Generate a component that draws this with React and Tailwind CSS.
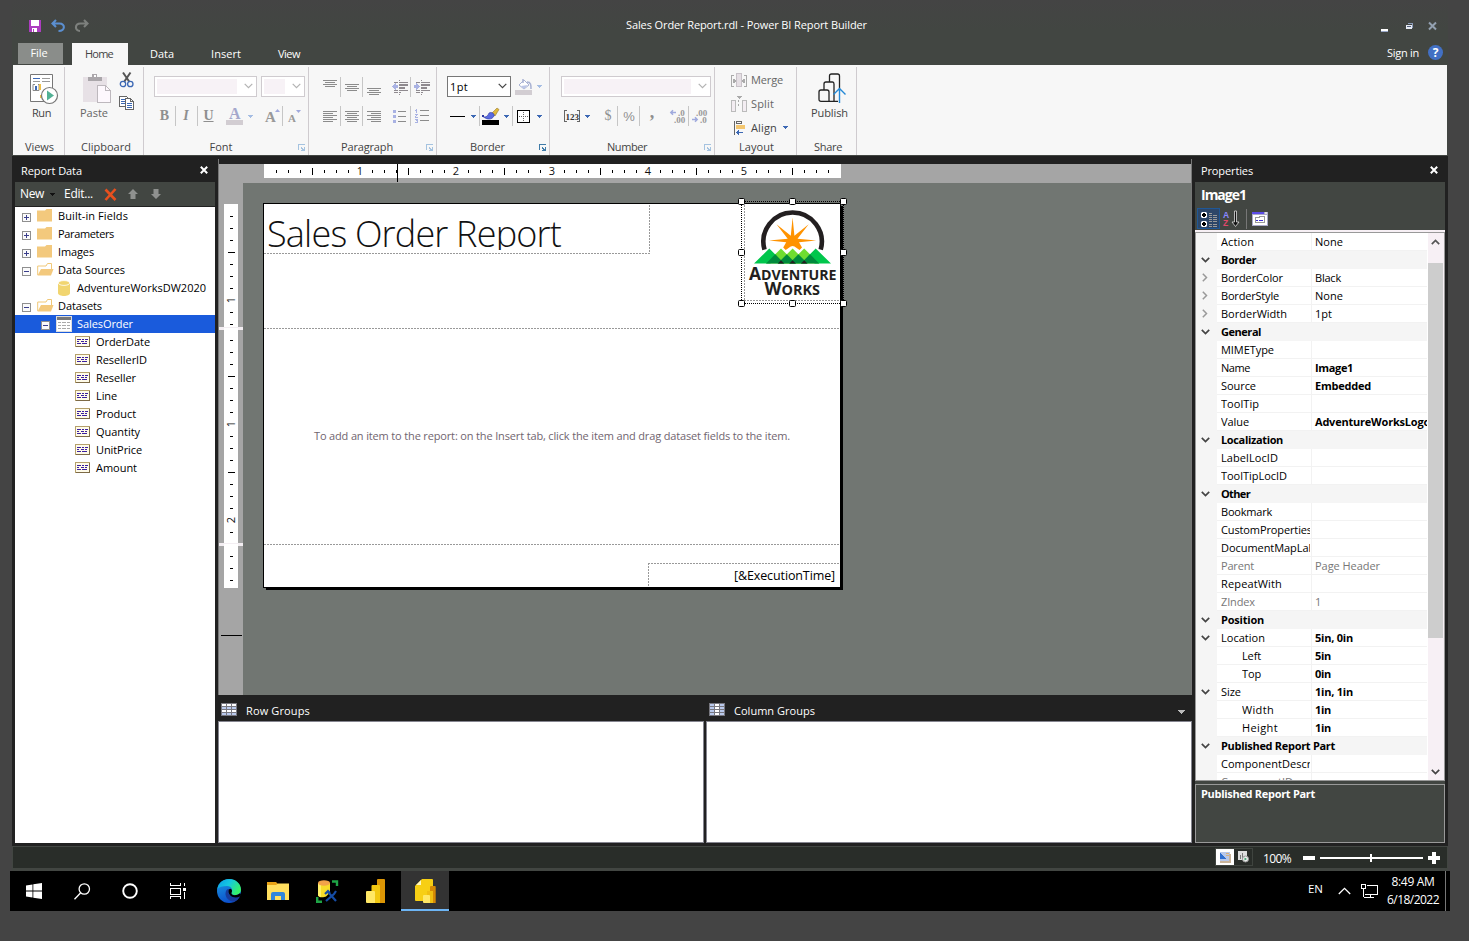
import { useLayoutEffect, useRef, useState } from "react";

/* Text run whose tracking is adjusted so that it spans a given width. */
function Txt({ w, className = "", children }) {
  const ref = useRef(null);
  const [spacing, setSpacing] = useState(0);
  useLayoutEffect(() => {
    if (!w) return;
    const el = ref.current;
    el.style.letterSpacing = "0px";
    const natural = el.getBoundingClientRect().width;
    const next = (w - natural) / String(children).length;
    el.style.letterSpacing = next + "px";
    setSpacing(next);
  }, [w, children]);
  return (
    <span ref={ref} className={"inline-block shrink-0 whitespace-pre " + className} style={{ letterSpacing: spacing }}>
      {children}
    </span>
  );
}

function Svg({ w, h, className = "", crisp = true, children }) {
  return (
    <svg
      width={w}
      height={h}
      viewBox={`0 0 ${w} ${h}`}
      fill="none"
      shapeRendering={crisp ? "crispEdges" : "auto"}
      className={"shrink-0 overflow-visible " + className}
    >
      {children}
    </svg>
  );
}

const Sep = ({ className = "" }) => <div className={"h-5 w-px shrink-0 bg-[#c6c6c6] " + className} />;

const Caret = ({ color = "#3c68b4", className = "" }) => (
  <Svg w={5} h={3} className={className}>
    <path d="M0 0h5v1H0zM1 1h3v1H1zM2 2h1v1H2z" fill={color} />
  </Svg>
);

const Chevron = ({ color, className = "" }) => (
  <Svg w={9} h={6} crisp={false} className={className}>
    <path d="M.7.8 4.5 4.6 8.3.8" stroke={color} strokeWidth="1.2" />
  </Svg>
);

const Launcher = ({ dim }) => (
  <Svg w={8} h={8}>
    <path d="M0 0h7v1H1v5H0z" fill={dim ? "#a5c3e0" : "#3f7ba8"} />
    <path d="M3 3h1v1h1v1h1V3h1v4H3V6h1V5H3z" fill={dim ? "#a5c3e0" : "#3f7ba8"} />
  </Svg>
);

/* ---------- title bar ---------- */

function TitleBar() {
  return (
    <div className="mb-[6px] flex h-[25px] items-center pl-[17px] text-white">
      <Svg w={12} h={12} className="mt-[2px]">
        <path d="M0 0h12v12H0z" fill="#ad3dc0" />
        <path d="M2 0h8v6H2z" fill="#fff" />
        <path d="M3 8h5v4H3z" fill="#fff" />
        <path d="M4 9h1v3H4z" fill="#ad3dc0" />
      </Svg>
      <Svg w={15} h={14} crisp={false} className="ml-[10px] mt-[2px]">
        <path d="M5 1 1.500 4.500 5 8M2 4.500h6.500c6 0 6 7.500-1 7.500" stroke="#5b8fd0" strokeWidth="2.100" />
      </Svg>
      <Svg w={15} h={14} crisp={false} className="ml-[8px] mt-[2px]">
        <path d="M10 1l3.500 3.500L10 8M13 4.500H6.500C.5 4.500.5 12 6 12" stroke="#7d807d" strokeWidth="2.100" />
      </Svg>
      <Txt w={241} className="ml-[537px]">Sales Order Report.rdl - Power BI Report Builder</Txt>
      <Svg w={7} h={3} className="ml-[514px] mt-[12px]">
        <path d="M0 0h7v2H0z" fill="#fff" />
        <path d="M0 2h7v1H0z" fill="#9aa9c8" />
      </Svg>
      <Svg w={8} h={7} className="ml-[18px] mt-[4px]">
        <path d="M2 0h5v5H6V1H2z" fill="#8c9bb8" />
        <path d="M0 2h6v4H0z" fill="#e8ecf5" />
        <path d="M1 3h4v1H1z" fill="#51607d" />
      </Svg>
      <Svg w={9} h={8} crisp={false} className="ml-[14px] mt-[3px]">
        <path d="M1 .5l7 7M8 .5l-7 7" stroke="#93a0b0" strokeWidth="2" />
      </Svg>
    </div>
  );
}

function Tabs() {
  return (
    <div className="flex h-[22px] pl-[6px] text-white">
      <div className="flex h-[21px] w-[45px] items-center justify-center bg-[#8a8d8a] pb-[2px] pr-[3px]"><Txt w={17}>File</Txt></div>
      <div className="ml-[9px] flex w-[56px] items-center justify-center bg-[#f7f7f7] pb-[2px] pr-[2px] text-[#444]"><Txt w={28}>Home</Txt></div>
      <div className="ml-[22px] flex items-center pb-[2px]"><Txt w={24}>Data</Txt></div>
      <div className="ml-[37px] flex items-center pb-[2px]"><Txt w={30}>Insert</Txt></div>
      <div className="ml-[37px] flex items-center pb-[2px]"><Txt w={22}>View</Txt></div>
      <div className="ml-auto flex items-center pb-[3px] pr-[5px]">
        <Txt w={32}>Sign in</Txt>
        <div className="ml-[9px] flex size-[15px] items-center justify-center rounded-full bg-[#4270c4] text-[12px] font-bold leading-none">?</div>
      </div>
    </div>
  );
}

/* ---------- ribbon ---------- */

function Group({ width, label, labelWidth, launcher, shift = "pl-[2px]", children }) {
  return (
    <div className={"relative flex shrink-0 flex-col " + width}>
      <div className="h-[73px]">{children}</div>
      <div className={"flex h-[17px] items-center justify-center text-[#444] " + shift}><Txt w={labelWidth}>{label}</Txt></div>
      {launcher && <div className="absolute bottom-[3px] right-[2px]"><Launcher dim={launcher === "dim"} /></div>}
    </div>
  );
}

const GroupSep = () => <div className="mt-[2px] h-[88px] w-px shrink-0 bg-[#cfcbcf]" />;

const Row = ({ className = "", children }) => <div className={"flex h-6 items-center " + className}>{children}</div>;

const Combo = ({ className, fill, value, dark }) => (
  <div className={"flex h-[21px] shrink-0 items-center border bg-white pl-[2px] pr-[3px] " + (dark ? "border-[#777] " : "border-[#cfcbcf] ") + className}>
    {fill && <div className={"h-[15px] bg-[#f7f2f6] " + fill} />}
    {value && <Txt w={18} className="text-black">{value}</Txt>}
    <Chevron color={dark ? "#444" : "#b3b3b3"} className="ml-auto" />
  </div>
);

function Lines({ rows, h, w = 14, className = "" }) {
  return (
    <Svg w={w} h={h} className={className}>
      {rows.map(([x, y, len]) => <path key={y} d={`M${x} ${y}h${len}v1h-${len}z`} fill="#8c8c8c" />)}
    </Svg>
  );
}

const TOP = [[0, 0, 14], [2, 2, 10], [0, 4, 14], [2, 6, 10]];
const LEFT = [[0, 0, 14], [0, 2, 10], [0, 4, 14], [0, 6, 10], [0, 8, 14], [0, 10, 10]];
const CENTER = [[0, 0, 14], [2, 2, 10], [0, 4, 14], [2, 6, 10], [0, 8, 14], [2, 10, 10]];
const RIGHT = [[0, 0, 14], [4, 2, 10], [0, 4, 14], [4, 6, 10], [0, 8, 14], [4, 10, 10]];

const Indent = ({ right, className }) => (
  <Svg w={16} h={15} className={className}>
    <path d="M7 0h1v1H7zM2 2h4v1H2zM7 2h9v1H7zM7 4h9v2H7zM7 7h6v2H7zM2 10h4v1H2zM7 10h9v1H7zM2 12h4v1H2zM7 12h2v1H7zM7 14h1v1H7z" fill="#8f8a8f" />
    <path d={right ? "M0 5h2V3h1v1h1v1h1v1h1v1H5v1H4v1H3v1H2V8H0z" : "M0 6h1V5h1V4h1V3h1v2h2v3H4v2H3V9H2V8H1V7H0z"} fill="#a9b2e3" />
  </Svg>
);

function Ribbon() {
  return (
    <div className="mx-px flex h-[90px] shrink-0 bg-[#f7f7f7]">
      <Group width="w-[51px]" label="Views" labelWidth={29}>
        <div className="flex flex-col items-center pl-[6px] pt-[8px] text-[#444]">
          <Svg w={29} h={31} crisp={false} className="ml-[4px]">
            <path d="M1.500 1.500h22v27h-22z" fill="#fff" stroke="#777" />
            <path d="M4 5.500h7" stroke="#3c68b4" /><path d="M13 5.500h8M4 8.500h7M13 8.500h8" stroke="#999" />
            <path d="M6 13h2v4H6z" fill="#3c68b4" /><path d="M9 11.500h1v6H4v-6h2" stroke="#8a8a8a" />
            <path d="M10 11h2v6h-2zM13 22h-2v3h2z" fill="#efc14a" />
            <circle cx="20.500" cy="22.500" r="8" fill="#fff" stroke="#777" strokeWidth="1.200" />
            <path d="M18 17.500l7 5-7 5z" fill="#52b195" />
          </Svg>
          <Txt w={19} className="mt-[3px]">Run</Txt>
        </div>
      </Group>
      <GroupSep />
      <Group width="w-[78px]" label="Clipboard" labelWidth={50} shift="pl-[4px]">
        <div className="flex">
          <div className="flex w-[46px] flex-col items-end pt-[8px] text-[#666]">
            <Svg w={29} h={31}>
              <path d="M1 4h24v25H1z" fill="#e7e1e6" />
              <path d="M6 8V4h4V1h5v3h5v4z" fill="#aaa6aa" /><path d="M12 2h2v2h-2z" fill="#fff" />
              <path d="M15.500 12.500h8l5 5v12h-13z" fill="#fdf8fd" stroke="#bdb8bd" /><path d="M23.500 12.500v5h5" stroke="#bdb8bd" />
            </Svg>
            <Txt w={28} className="mr-[3px] mt-[3px]">Paste</Txt>
          </div>
          <div className="ml-[7px] flex flex-col pt-[7px]">
            <Svg w={16} h={16} crisp={false} className="ml-[1px]">
              <path d="M4 .5l6.500 9.500M11.500.500 5 10" stroke="#555" strokeWidth="2" />
              <circle cx="4" cy="12" r="2.700" stroke="#3c68b4" strokeWidth="1.300" /><circle cx="11.300" cy="12" r="2.700" stroke="#3c68b4" strokeWidth="1.300" />
            </Svg>
            <Svg w={16} h={15} className="ml-px mt-[8px]">
              <path d="M.5.500h7l2 2v8h-9z" fill="#fff" stroke="#666" />
              <path d="M2 3h4v1H2zM2 5h4v1H2zM2 7h4v1H2z" fill="#3c68b4" />
              <path d="M6.500 2.500h5l3 3v8h-8z" fill="#fff" stroke="#666" /><path d="M11.500 2.500v3h3" stroke="#666" />
              <path d="M8 7h5v1H8zM8 9h5v1H8zM8 11h5v1H8z" fill="#3c68b4" />
            </Svg>
          </div>
        </div>
      </Group>
      <GroupSep />
      <Group width="w-[164px]" label="Font" labelWidth={23} launcher="dim" shift="pr-[10px]">
        <Row className="mt-[9px] pl-[10px]">
          <Combo className="w-[103px]" fill="w-[80px]" />
          <Combo className="ml-[4px] w-[44px]" fill="w-[21px]" />
        </Row>
        <Row className="mt-[6px] pl-[15px] font-['Liberation_Serif'] text-[14px] font-bold text-[#8f8f8f]">
          <span className="w-[11px] text-center">B</span>
          <Sep className="ml-[5px]" />
          <span className="ml-[5px] w-[10px] text-center italic">I</span>
          <Sep className="ml-[6px]" />
          <span className="ml-[5px] w-[11px] text-center underline">U</span>
          <Svg w={17} h={17} crisp={false} className="ml-[12px]">
            <text x="3" y="11" fontFamily="Liberation Serif" fontSize="16" fontWeight="bold" fill="#a5a8cc">A</text>
            <path d="M0 12h17v5H0z" fill="#d2cdd2" />
          </Svg>
          <Caret color="#a5bde3" className="ml-[5px]" />
          <Svg w={15} h={14} crisp={false} className="ml-[12px]">
            <text x="0" y="13" fontFamily="Liberation Serif" fontSize="15" fontWeight="bold" fill="#999">A</text>
            <path d="M10 3h5l-2.500-3z" fill="#9fa8dc" />
          </Svg>
          <Sep className="ml-[2px]" />
          <Svg w={13} h={14} crisp={false} className="ml-[5px]">
            <text x="0" y="13" fontFamily="Liberation Serif" fontSize="11" fontWeight="bold" fill="#999">A</text>
            <path d="M8 1h5l-2.500 3z" fill="#9fa8dc" />
          </Svg>
        </Row>
      </Group>
      <GroupSep />
      <Group width="w-[127px]" label="Paragraph" labelWidth={52} launcher="dim" shift="pr-[11px]">
        <Row className="mt-[10px] pl-[14px]">
          <Lines rows={TOP} h={14} />
          <Sep className="ml-[3px]" />
          <Lines rows={TOP} h={7} className="ml-[4px]" />
          <Sep className="ml-[3px]" />
          <Lines rows={TOP} h={7} className="ml-[4px] mt-[8px]" />
          <Indent className="ml-[11px]" />
          <Sep className="ml-[2px]" />
          <Indent right className="ml-[3px]" />
        </Row>
        <Row className="mt-[5px] pl-[14px]">
          <Lines rows={LEFT} h={11} />
          <Sep className="ml-[3px]" />
          <Lines rows={CENTER} h={11} className="ml-[4px]" />
          <Sep className="ml-[3px]" />
          <Lines rows={RIGHT} h={11} className="ml-[4px]" />
          <Svg w={14} h={13} className="ml-[12px] mt-[1px]">
            <path d="M0 0h3v3H0zM0 5h3v3H0zM0 10h3v3H0z" fill="#a9b2e3" />
            <path d="M5 1h8v1H5zM5 6h8v1H5zM5 11h8v1H5z" fill="#8c8c8c" />
          </Svg>
          <Sep className="ml-[3px]" />
          <Svg w={15} h={14} className="ml-[4px]">
            <path d="M1 0h1v4H1zM0 1h1v1H0zM0 5h3v1H2v1H1v1h2v1H0V7h1V6H0zM0 10h3v4H0v-1h2v-1H1v-1H0z" fill="#a9b2e3" />
            <path d="M5 1h9v1H5zM5 6h9v1H5zM5 11h9v1H5z" fill="#8c8c8c" />
          </Svg>
        </Row>
      </Group>
      <GroupSep />
      <Group width="w-[112px]" label="Border" labelWidth={35} launcher="on" shift="pr-[11px]">
        <Row className="mt-[9px] pl-[10px]">
          <Combo className="w-[64px]" value="1pt" dark />
          <Svg w={18} h={17} crisp={false} className="ml-[4px] mt-[1px]">
            <path d="M0 12h17v5H0z" fill="#d2cdd2" />
            <path d="M4 7l5-5 5 5-5 4z" fill="#fff" stroke="#a9b2d3" />
            <path d="M6 8l7-1-4 4z" fill="#bcc6e6" /><path d="M8 5V1M12 4c4 0 4 3 4 7" stroke="#a9b2d3" strokeWidth="1.500" />
          </Svg>
          <Caret color="#a5bde3" className="ml-[4px]" />
        </Row>
        <Row className="mt-[6px] pl-[13px]">
          <div className="h-px w-[15px] bg-black" />
          <Caret className="ml-[6px]" />
          <Sep className="ml-[3px]" />
          <Svg w={18} h={17} crisp={false} className="ml-[2px] mt-[1px]">
            <path d="M0 12h17v5H0z" fill="#000" />
            <path d="M10 5l5-5 2 1.500-4 6.500z" fill="#e0b83c" stroke="#8a6d20" strokeWidth=".5" /><path d="M1 8.500c3 1.500 5-1 6-3.500 2-1.500 6 .5 5 3-2 4-7 4-11 .5z" fill="#5a6be0" stroke="#2b35a0" strokeWidth=".6" /><path d="M0 7h2v2H0z" fill="#2b35a0" />
          </Svg>
          <Caret className="ml-[4px]" />
          <Sep className="ml-[3px]" />
          <Svg w={13} h={13} className="ml-[4px]">
            <path d="M.5.500h12v12H.5z" fill="#fff" stroke="#000" />
            <path d="M6 2h1v1H6zM6 4h1v1H6zM6 6h1v1H6zM6 8h1v1H6zM6 10h1v1H6zM2 6h1v1H2zM4 6h1v1H4zM8 6h1v1H8zM10 6h1v1h-1z" fill="#666" />
          </Svg>
          <Caret className="ml-[7px]" />
        </Row>
      </Group>
      <GroupSep />
      <Group width="w-[164px]" label="Number" labelWidth={40} launcher="dim" shift="pr-[10px]">
        <Row className="mt-[9px] pl-[11px]">
          <Combo className="w-[150px]" fill="w-[127px]" />
        </Row>
        <Row className="mt-[6px] pl-[14px] text-[#8f8f8f]">
          <Svg w={16} h={12}>
            <path d="M3 .5H.5v11H3M13 .5h2.500v11H13" stroke="#666" />
            <text x="1.500" y="9.500" fontFamily="Liberation Serif" fontSize="9" fontWeight="bold" fill="#333">123</text>
          </Svg>
          <Caret className="ml-[5px]" />
          <span className="ml-[12px] w-[12px] text-center font-['Liberation_Serif'] text-[14px]">$</span>
          <Sep className="ml-[3px]" />
          <span className="ml-[4px] w-[14px] text-center font-['Liberation_Sans'] text-[13px]">%</span>
          <Sep className="ml-[3px]" />
          <span className="ml-[8px] w-[8px] pb-[8px] text-center font-['Liberation_Serif'] text-[18px] font-bold">,</span>
          <Svg w={16} h={14} crisp={false} className="ml-[14px]">
            <path d="M6 3.500H1M3 1.200.800 3.500 3 5.800" stroke="#a0aadd" strokeWidth="1.500" />
            <text x="8" y="6.500" fontFamily="Liberation Serif" fontSize="9" fontWeight="bold" fill="#999">.0</text>
            <text x="4" y="14" fontFamily="Liberation Serif" fontSize="9" fontWeight="bold" fill="#999">.00</text>
          </Svg>
          <Sep className="ml-[2px]" />
          <Svg w={16} h={14} crisp={false} className="ml-[3px]">
            <path d="M0 10.500h5M3 8.200l2.200 2.300L3 12.800" stroke="#a0aadd" strokeWidth="1.500" />
            <text x="4" y="6.500" fontFamily="Liberation Serif" fontSize="9" fontWeight="bold" fill="#999">.00</text>
            <text x="8" y="14" fontFamily="Liberation Serif" fontSize="9" fontWeight="bold" fill="#999">.0</text>
          </Svg>
        </Row>
      </Group>
      <GroupSep />
      <Group width="w-[81px]" label="Layout" labelWidth={35}>
        <div className="flex flex-col pl-[16px] pt-[3px] text-[#666]">
          <Row>
            <Svg w={16} h={14}>
              <path d="M3 2.500H.5v11H3M13 2.500h2.500v11H13" stroke="#aaa" />
              <path d="M5.500.500h5v13h-5z" fill="#e5dfe4" stroke="#c8c2c8" /><path d="M2 6h2v1h1v2H4v1H2zM14 6h-2v1h-1v2h1v1h2z" fill="#aaa" />
            </Svg>
            <Txt w={32} className="mb-[2px] ml-[4px]">Merge</Txt>
          </Row>
          <Row>
            <Svg w={16} h={16}>
              <path d="M.5 4.500h4v11h-4zM11.500 4.500h4v11h-4z" fill="#f3edf2" stroke="#bbb" />
              <path d="M6 0h5v1H6zM7 1h3v1H7zM8 2h1v1H8zM7 4h1v2H7zM7 8h1v2H7z" fill="#aaa" />
            </Svg>
            <Txt w={23} className="mb-[2px] ml-[4px]">Split</Txt>
          </Row>
          <Row className="text-[#444]">
            <Svg w={14} h={14} className="ml-[3px]">
              <path d="M0 0h1v14H0z" fill="#666" /><path d="M2.500.500h5v2h-5z" stroke="#666" />
              <path d="M2 4h9v4H2z" fill="#f3c66f" /><path d="M2 11h1v-1h1V9h1v2h4v1H5v2H4v-1H3v-1H2z" fill="#3c68b4" />
            </Svg>
            <Txt w={26} className="mb-[2px] ml-[3px]">Align</Txt>
            <Caret className="mb-px ml-[6px]" />
          </Row>
        </div>
      </Group>
      <GroupSep />
      <Group width="w-[59px]" label="Share" labelWidth={28} shift="pl-[3px]">
        <div className="flex flex-col items-center pl-[6px] pt-[8px] text-[#444]">
          <Svg w={28} h={30} crisp={false} className="ml-[5px]">
            <path d="M11.500 9V3q0-2 2-2h6q2 0 2 2v13M6 17v-6q0-2 2-2h6.500q1.500 0 1.500 2v10" stroke="#222" strokeWidth="1.300" />
            <path d="M1 19q0-2 2-2h6q2 0 2 2v9.300H3q-2 0-2-2zM11 28.300h9M16 21v7" stroke="#222" strokeWidth="1.300" />
            <path d="M21.500 30V16M15.500 21.500l6-6 6 6" stroke="#2388d6" strokeWidth="1.400" />
          </Svg>
          <Txt w={37} className="mt-[4px]">Publish</Txt>
        </div>
      </Group>
      <GroupSep />
    </div>
  );
}

/* ---------- report data ---------- */

const CloseX = () => (
  <Svg w={8} h={8} crisp={false} className="mb-[2px]">
    <path d="M.8.800l6.400 6.400M7.200.800.800 7.200" stroke="#fff" strokeWidth="2" />
  </Svg>
);

const Toggle = ({ open }) => (
  <Svg w={9} h={9} className="mt-[2px]">
    <path d="M.5.500h8v8h-8z" fill="#fafafa" stroke="#8f8f8f" />
    <path d={open ? "M2 4h5v1H2z" : "M2 4h5v1H2zM4 2h1v5H4z"} fill="#3b3f8c" />
  </Svg>
);

const Folder = ({ open }) => (
  <Svg w={17} h={13} crisp={false} className="mb-[2px]">
    {open ? (
      <>
        <path d="M.7 12V3H9l1.500-2.500h4V6" stroke="#f0c878" strokeWidth="1" fill="#fff" />
        <path d="M.5 12.500 4 6h12.500l-2.500 6.500z" fill="#f3c97d" />
      </>
    ) : (
      <path d="M0 1.500h8l1.500-1.500H15v12.500H0z" fill="#f3c97d" />
    )}
  </Svg>
);

const FieldIcon = () => (
  <Svg w={15} h={11} className="mb-px">
    <path d="M.5.500h14v10H.5z" fill="#fffbe8" stroke="#7d6a46" />
    <path d="M0 0h15v1H0zM0 0h1v11H0z" fill="#b5a06c" />
    <path d="M2 3h4v1H2zM7 3h2v1H7zM10 3h3v1h-3zM2 5h2v1H2zM6 5h3v1H6zM10 5h2v1h-2zM2 7h4v1H2zM7 7h5v1H7z" fill="#3b1fa0" />
  </Svg>
);

const ROOTS = [["Built-in Fields", 70], ["Parameters", 56], ["Images", 36]];
const FIELDS = [["OrderDate", 54], ["ResellerID", 51], ["Reseller", 40], ["Line", 21], ["Product", 40], ["Quantity", 44], ["UnitPrice", 46], ["Amount", 41]];

function ReportData() {
  const row = "flex h-[18px] items-center";
  return (
    <div className="flex w-[206px] shrink-0 flex-col bg-[#212121] pl-[3px] pr-[3px] pb-[3px]">
      <div className="flex h-[26px] items-center justify-between pl-[6px] pr-[7px] pt-[3px] text-white"><Txt w={61}>Report Data</Txt><CloseX /></div>
      <div className="flex h-[24px] items-center bg-[#424642] pl-[5px] text-[12px] text-white">
        <Txt w={24}>New</Txt>
        <Caret color="#111" className="ml-[6px]" />
        <Txt w={29} className="ml-[9px]">Edit...</Txt>
        <Svg w={13} h={13} crisp={false} className="ml-[11px]"><path d="M1.500 1.500l10 10.500M11.500 1 1.500 12" stroke="#e8501e" strokeWidth="2.600" /></Svg>
        <Svg w={10} h={10} crisp={false} className="ml-[11px]"><path d="M5 0l5 5H7.500v5h-5V5H0z" fill="#8f918f" /></Svg>
        <Svg w={10} h={10} crisp={false} className="ml-[13px]"><path d="M5 10l5-5H7.500V0h-5v5H0z" fill="#8f918f" /></Svg>
      </div>
      <div className="h-px shrink-0" />
      <div className="flex-1 bg-white text-black">
        {ROOTS.map(([name, w]) => (
          <div key={name} className={row + " pl-[7px]"}><Toggle /><div className="w-[6px]" /><Folder /><Txt w={w} className="mb-[2px] ml-[4px]">{name}</Txt></div>
        ))}
        <div className={row + " pl-[7px]"}><Toggle open /><div className="w-[6px]" /><Folder open /><Txt w={67} className="mb-[2px] ml-[4px]">Data Sources</Txt></div>
        <div className={row + " pl-[43px]"}>
          <Svg w={12} h={16} crisp={false}>
            <path d="M0 3v10c0 4 12 4 12 0V3z" fill="#f1d570" /><ellipse cx="6" cy="3" rx="5.700" ry="2.400" fill="#f1d570" stroke="#fff" strokeWidth=".8" />
          </Svg>
          <Txt w={129} className="mb-[2px] ml-[7px]">AdventureWorksDW2020</Txt>
        </div>
        <div className={row + " pl-[7px]"}><Toggle open /><div className="w-[6px]" /><Folder open /><Txt w={44} className="mb-[2px] ml-[4px]">Datasets</Txt></div>
        <div className={row + " bg-[#1a5bdc] pl-[26px] text-white"}>
          <Toggle open />
          <Svg w={16} h={16} className="ml-[6px]">
            <path d="M0 0h16v16H0z" fill="#fff" /><path d="M1 1h14v3H1z" fill="#777" /><path d="M.5.500h15v15H.5z" stroke="#ddd" />
            <path d="M2 6h3v1H2zM6 6h4v1H6zM11 6h3v1h-3zM2 9h3v1H2zM6 9h4v1H6zM11 9h3v1h-3zM2 12h3v1H2zM6 12h4v1H6zM11 12h3v1h-3z" fill="#aaa" />
          </Svg>
          <Txt w={56} className="mb-[2px] ml-[5px]">SalesOrder</Txt>
        </div>
        {FIELDS.map(([name, w]) => (
          <div key={name} className={row + " pl-[60px]"}><FieldIcon /><Txt w={w} className="mb-[2px] ml-[6px]">{name}</Txt></div>
        ))}
      </div>
    </div>
  );
}

/* ---------- designer ---------- */

const range = (n) => Array.from({ length: n }, (_, i) => i + 1);

function HorizontalRuler() {
  return (
    <Svg w={577} h={14}>
      <path d="M0 0h577v14H0z" fill="#fff" />
      {range(47).map((i) =>
        i % 8 === 0 ? (
          <text key={i} x={i * 12} y="11" fontSize="11" textAnchor="middle" fill="#111" className="font-['Open_Sans']">{i / 8}</text>
        ) : i % 4 === 0 ? (
          <path key={i} d={`M${i * 12} 4h1v7h-1z`} fill="#000" />
        ) : (
          <path key={i} d={`M${i * 12} 6h1v3h-1z`} fill="#000" />
        )
      )}
    </Svg>
  );
}

function VerticalRuler({ h, count }) {
  return (
    <Svg w={14} h={h} className="ml-[5px]">
      <path d={`M0 0h14v${h}H0z`} fill="#fff" />
      {range(count).map((i) =>
        i % 8 === 0 ? (
          <text key={i} transform={`translate(11 ${i * 12}) rotate(-90)`} fontSize="11" textAnchor="middle" fill="#111" className="font-['Open_Sans']">{i / 8}</text>
        ) : i % 4 === 0 ? (
          <path key={i} d={`M4 ${i * 12}h7v1H4z`} fill="#000" />
        ) : (
          <path key={i} d={`M6 ${i * 12}h3v1H6z`} fill="#000" />
        )
      )}
    </Svg>
  );
}

const HDash = ({ className }) => <div className={"absolute h-px bg-[repeating-linear-gradient(90deg,#999_0_2px,transparent_2px_3px)] " + className} />;
const VDash = ({ className }) => <div className={"absolute w-px bg-[repeating-linear-gradient(180deg,#999_0_2px,transparent_2px_3px)] " + className} />;

function Logo() {
  const centers = [32, 43.6, 55.2];
  const overlaps = [26.2, 37.8, 49.4, 61];
  return (
    <Svg w={88} h={88} crisp={false}>
      <path d="M15.500 40.700A29.200 29.200 0 1 1 71.700 40.700" stroke="#231f20" strokeWidth="4.600" />
      <path
        d="M43.600 8.500 45.400 26.800 59.700 15.200 48.500 29.800 67.200 31.500 50 33.300 53 38.500 50.500 41 45.500 37.500 43.600 37 41.700 37.500 36.700 41 34.200 38.500 37.200 33.300 20 31.500 38.700 29.800 27.500 15.200 41.800 26.800z"
        fill="#ff9300"
      />
      {centers.map((x) => <path key={x} d={`M${x - 15} 54.500l15-15 15 15z`} fill="#6fdd30" />)}
      <path d="M5 54.500 20.300 39.500l8 8-7 7zM82 54.500 66.700 39.500l-8 8 7 7z" fill="#00c64c" />
      {overlaps.map((x) => <path key={x} d={`M${x - 9.2} 54.500l9.200-9.200 9.200 9.200z`} fill="#008a3c" />)}
      {centers.map((x) => <path key={x} d={`M${x - 3.2} 54.500l3.200-3.200 3.200 3.200z`} fill="#231f20" />)}
      <g fill="#231f20" fontWeight="bold" className="font-['Open_Sans']">
        <text x="0" y="71" fontSize="17" textLength="12" lengthAdjust="spacingAndGlyphs">A</text>
        <text x="12" y="71" fontSize="14" textLength="75.500" lengthAdjust="spacingAndGlyphs">DVENTURE</text>
        <text x="15.500" y="85.700" fontSize="17" textLength="17" lengthAdjust="spacingAndGlyphs">W</text>
        <text x="32.500" y="85.700" fontSize="14" textLength="38.500" lengthAdjust="spacingAndGlyphs">ORKS</text>
      </g>
    </Svg>
  );
}

const Handle = ({ className }) => <div className={"absolute size-[7px] rounded-[1.500px] border border-black bg-white " + className} />;

function ReportPage() {
  return (
    <div className="absolute left-[20px] top-[20px] h-[387px] w-[580px]">
      <div className="absolute left-[3px] top-[3px] h-[384px] w-[577px] bg-black" />
      <div className="absolute left-0 top-0 h-[385px] w-[578px] border border-black bg-white" />
      <div className="absolute left-[4px] top-[2px] h-[45px] w-[380px] overflow-hidden">
        <Txt w={294} className="mt-[4px] font-['Open_Sans'] text-[36px] font-light leading-[50px] text-[#111]">Sales Order Report</Txt>
      </div>
      <HDash className="left-[1px] top-[50px] w-[386px]" />
      <VDash className="left-[386px] top-[2px] h-[48px]" />
      <HDash className="left-[1px] top-[125px] w-[576px]" />
      <Txt w={476} className="absolute left-[51px] top-[225px] leading-4 text-[#71656f]">To add an item to the report: on the Insert tab, click the item and drag dataset fields to the item.</Txt>
      <HDash className="left-[1px] top-[341px] w-[576px]" />
      <HDash className="left-[385px] top-[360px] w-[192px]" />
      <VDash className="left-[385px] top-[360px] h-[24px]" />
      <Txt w={101} className="absolute left-[471px] top-[365px] text-[12.500px] leading-4 text-black">[&ExecutionTime]</Txt>

      <div className="absolute left-[478px] top-[-2px] h-[103px] w-[103px]">
        <VDash className="left-[3px] top-[4px] h-[96px]" />
        <HDash className="left-[3px] top-[99px] w-[96px]" />
        <div className="absolute left-[8px] top-[8px]"><Logo /></div>
        <div className="absolute left-0 top-0 h-px w-full bg-[repeating-linear-gradient(90deg,#000_0_1px,#777_1px_2px)]" />
        <div className="absolute bottom-0 left-0 h-px w-full bg-[repeating-linear-gradient(90deg,#000_0_1px,#fff_1px_2px)]" />
        <div className="absolute left-0 top-0 h-full w-px bg-[repeating-linear-gradient(180deg,#000_0_1px,#fff_1px_2px)]" />
        <div className="absolute right-0 top-0 h-full w-px bg-[repeating-linear-gradient(180deg,#000_0_1px,#777_1px_2px)]" />
        <Handle className="-left-[3px] -top-[3px]" />
        <Handle className="left-[48px] -top-[3px]" />
        <Handle className="-right-[3px] -top-[3px]" />
        <Handle className="-left-[3px] top-[48px]" />
        <Handle className="-right-[3px] top-[48px]" />
        <Handle className="-bottom-[3px] -left-[3px]" />
        <Handle className="-bottom-[3px] left-[48px]" />
        <Handle className="-bottom-[3px] -right-[3px]" />
      </div>
    </div>
  );
}

const GroupsIcon = ({ column }) => (
  <Svg w={16} h={13}>
    <path d="M0 0h16v13H0z" fill="#77777f" />
    {[0, 1, 2].map((c) => [0, 1, 2, 3].map((r) => (
      <path key={c + "-" + r} d={`M${1 + c * 5} ${1 + r * 3}h4v2h-4z`} fill={(column ? c === 1 : r % 2 === 0) ? "#fff" : "#b9c9ec"} />
    )))}
  </Svg>
);

function Designer() {
  return (
    <div className="flex w-[974px] shrink-0 flex-col bg-[#212121] pb-[3px]">
      <div className="mt-[3px] h-[536px] border-l border-r border-[#777]">
        <div className="h-[5px] bg-[#212121]" />
        <div className="relative h-[19px] bg-[#a5a5a5] pl-[45px]">
          <HorizontalRuler />
          <div className="absolute left-[178px] top-0 h-[18px] w-px bg-black" />
        </div>
        <div className="flex h-[512px]">
          <div className="w-[24px] shrink-0 bg-[#a5a5a5] pt-[21px]">
            <VerticalRuler h={123} count={10} />
            <div className="h-[3px] bg-[#f3eef2]" />
            <div className="-mt-[2px]" />
            <VerticalRuler h={215} count={17} />
            <div className="h-[3px] bg-[#f3eef2]" />
            <div className="-mt-[2px]" />
            <VerticalRuler h={44} count={3} />
            <div className="ml-[2px] mt-[47px] h-px w-[21px] bg-black" />
          </div>
          <div className="relative flex-1 bg-[#717672]"><ReportPage /></div>
        </div>
      </div>
      <div className="flex h-[26px] items-center pt-[4px] text-white">
        <div className="mb-[1px] ml-[3px]"><GroupsIcon /></div>
        <Txt w={64} className="ml-[9px]">Row Groups</Txt>
        <div className="mb-[1px] ml-[399px]"><GroupsIcon column /></div>
        <Txt w={81} className="ml-[9px]">Column Groups</Txt>
        <Svg w={7} h={4} className="ml-auto mr-[7px] mt-[3px]"><path d="M0 0h7v1H0zM1 1h5v1H1zM2 2h3v1H2zM3 3h1v1H3z" fill="#bbb" /></Svg>
      </div>
      <div className="flex flex-1 gap-[2px]">
        <div className="flex-1 border border-[#85858f] bg-white" />
        <div className="flex-1 border border-[#85858f] bg-white" />
      </div>
    </div>
  );
}

/* ---------- properties ---------- */

/* kind: c = category, p = property, e = expandable, o = expanded, s = sub-property, r = read only */
const PROPS = [
  ["p", "Action", 33, "None", 28],
  ["c", "Border", 35],
  ["e", "BorderColor", 62, "Black", 26],
  ["e", "BorderStyle", 58, "None", 28],
  ["e", "BorderWidth", 66, "1pt", 17],
  ["c", "General", 40],
  ["p", "MIMEType", 53],
  ["p", "Name", 29, "Image1", 38, true],
  ["p", "Source", 35, "Embedded", 56, true],
  ["p", "ToolTip", 38],
  ["p", "Value", 28, "AdventureWorksLogo", 115, true],
  ["c", "Localization", 62],
  ["p", "LabelLocID", 57],
  ["p", "ToolTipLocID", 66],
  ["c", "Other", 29],
  ["p", "Bookmark", 51],
  ["p", "CustomProperties", 91],
  ["p", "DocumentMapLabel", 103],
  ["r", "Parent", 33, "Page Header", 65],
  ["p", "RepeatWith", 61],
  ["r", "ZIndex", 34, "1", 6],
  ["c", "Position", 43],
  ["o", "Location", 44, "5in, 0in", 38, true],
  ["s", "Left", 19, "5in", 16, true],
  ["s", "Top", 19, "0in", 16, true],
  ["o", "Size", 20, "1in, 1in", 38, true],
  ["s", "Width", 32, "1in", 16, true],
  ["s", "Height", 36, "1in", 16, true],
  ["c", "Published Report Part", 114],
  ["p", "ComponentDescription", 120],
  ["r", "ComponentID", 72],
];

const Down = () => <Svg w={9} h={6} crisp={false}><path d="M.8.800 4.500 4.500 8.200.800" stroke="#444" strokeWidth="1.700" /></Svg>;
const Next = () => <Svg w={6} h={9} crisp={false}><path d="M.8.800 4.500 4.500.800 8.200" stroke="#999" strokeWidth="1.500" /></Svg>;

function PropRow({ item: [kind, name, w, value, vw, bold] }) {
  const tone = kind === "r" ? "text-[#777]" : "text-black";
  return (
    <div className={"flex h-[18px] shrink-0 " + tone}>
      <div className="flex w-[21px] shrink-0 items-center justify-center bg-[#f5f5f5] pb-px pr-[3px]">
        {(kind === "c" || kind === "o") && <Down />}
        {kind === "e" && <Next />}
      </div>
      {kind === "c" ? (
        <div className="flex flex-1 items-center bg-[#f5f5f5] pb-px pl-[4px] font-bold"><Txt w={w}>{name}</Txt></div>
      ) : (
        <>
          <div className={"flex w-[95px] shrink-0 border-b border-r border-[#f2f2f2] pr-px " + (kind === "s" ? "pl-[25px]" : "pl-[4px]")}>
            <div className="flex flex-1 items-center overflow-hidden"><Txt w={w}>{name}</Txt></div>
          </div>
          <div className={"flex flex-1 items-center overflow-hidden border-b border-[#f2f2f2] pl-[3px] " + (bold ? "font-bold" : "")}>
            {value && <Txt w={vw}>{value}</Txt>}
          </div>
        </>
      )}
    </div>
  );
}

function Properties() {
  return (
    <div className="flex w-[256px] shrink-0 flex-col bg-[#212121] pb-[3px] pl-[3px] pr-[3px]">
      <div className="flex h-[26px] shrink-0 items-center justify-between pl-[6px] pr-[7px] pt-[3px] text-white"><Txt w={52}>Properties</Txt><CloseX /></div>
      <div className="flex h-[48px] shrink-0 flex-col bg-[#424642]">
        <div className="flex h-[26px] items-center pl-[6px] text-[14px] font-bold text-white"><Txt w={45}>Image1</Txt></div>
        <div className="flex h-[21px] items-center pl-[2px]">
          <div className="flex h-[21px] w-[23px] items-center justify-center border border-[#1f5796] bg-[#2d4668]">
            <Svg w={16} h={16}>
              <path d="M0 1h6v6H0zM0 10h6v6H0z" fill="#fff" /><path d="M1 3h4v2H1zM2 2h2v4H2zM1 12h4v2H1zM2 11h2v4H2z" fill="#000" />
              <path d="M0 1h1v1H0zM5 1h1v1H5zM0 6h1v1H0zM5 6h1v1H5zM0 10h1v1H0zM5 10h1v1H5zM0 15h1v1H0zM5 15h1v1H5z" fill="#7f92b5" />
              <path d="M8 2h3v1H8zM8 4h3v1H8zM12 4h4v1h-4zM8 6h3v1H8zM12 6h4v1h-4zM8 8h3v1H8zM12 8h4v1h-4zM8 10h3v1H8zM12 10h4v1h-4zM8 13h3v1H8zM12 13h4v1h-4zM8 15h3v1H8zM12 15h4v1h-4z" fill="#9a9a9a" />
            </Svg>
          </div>
          <Svg w={17} h={16} crisp={false} className="ml-[3px]">
            <text x="0" y="7" fontSize="8.500" fontWeight="bold" fill="#8b88ff" className="font-['Liberation_Sans']">A</text>
            <text x="0" y="15" fontSize="8.500" fontWeight="bold" fill="#e0486a" className="font-['Liberation_Sans']">Z</text>
            <path d="M11.500 0h2v11h2.500l-3.500 4.500L9 11h2.500z" fill="#111" stroke="#ddd" strokeWidth=".8" />
          </Svg>
          <div className="ml-[6px] h-5 w-px bg-[#777]" />
          <Svg w={16} h={14} className="ml-[5px]">
            <path d="M0 0h16v14H0z" fill="#a9a9c8" /><path d="M0 0h12v2H0z" fill="#5b4be8" /><path d="M13 0h2v2h-2z" fill="#ddd" />
            <path d="M1 3h14v10H1z" fill="#fff" /><path d="M3.500 5.500h4v-1h5v6h-9z" stroke="#999" /><path d="M4 8h2v1H4zM7 8h4v1H7z" fill="#3c2fd0" />
          </Svg>
        </div>
      </div>
      <div className="h-[2px] shrink-0 bg-[#f7f0f5]" />
      <div className="flex h-[549px] shrink-0 border border-[#999] bg-white">
        <div className="flex flex-1 flex-col overflow-hidden">{PROPS.map((p, i) => <PropRow key={i} item={p} />)}</div>
        <div className="ml-px flex w-[16px] shrink-0 flex-col items-center bg-[#f7f0f5] pr-px">
          <div className="flex h-[30px] items-start pt-[6px]"><Svg w={9} h={6} crisp={false}><path d="M.8 5.200 4.500 1.500 8.200 5.200" stroke="#555" strokeWidth="1.700" /></Svg></div>
          <div className="h-[375px] w-[15px] bg-[#cdcdcd]" />
          <div className="mt-auto pb-[5px]"><Down /></div>
        </div>
      </div>
      <div className="h-[3px] shrink-0 bg-[#424642]" />
      <div className="flex-1 border border-[#999] bg-[#424642] pl-[5px] pt-px font-bold leading-4 text-white"><Txt w={114}>Published Report Part</Txt></div>
    </div>
  );
}

/* ---------- status bar and taskbar ---------- */

function StatusBar() {
  return (
    <div className="mx-px mt-px flex h-[21px] shrink-0 items-center justify-end bg-[#292d29] pr-[7px] text-white">
      <div className="mb-[1px] flex h-[18px] items-center border border-[#3f443f]">
        <div className="flex h-[16px] w-[18px] items-center justify-center bg-white">
          <Svg w={11} h={11}>
            <path d="M0 0h10v9H0z" fill="#b8c8ea" /><path d="M0 1l7 6H0z" fill="#2f6fd0" /><path d="M6 1h3v1H6zM6 3h3v1H6z" fill="#d8b27a" /><path d="M9 2h2v9H9zM0 9h11v2H0z" fill="#c9b49a" />
          </Svg>
        </div>
        <Svg w={12} h={12} className="ml-[3px] mr-[3px]" crisp={false}>
          <path d="M1 0h9v9H1z" fill="#ddd" /><path d="M3 4h1v4H3zM5 2h1v6H5zM7 5h1v3H7z" fill="#777" /><circle cx="8.500" cy="8" r="3" fill="#eee" stroke="#999" /><path d="M7.500 6.500l2.500 1.500-2.500 1.500z" fill="#3a9d68" />
        </Svg>
      </div>
      <Txt w={28} className="ml-[10px] mt-[2px] text-[12px]">100%</Txt>
      <div className="ml-[12px] h-[4px] w-[12px] bg-white" />
      <Svg w={103} h={8} className="ml-[5px]"><path d="M0 3h103v2H0zM50 0h2v8h-2z" fill="#fff" /></Svg>
      <Svg w={12} h={12} className="ml-[5px]"><path d="M4 0h4v4h4v4H8v4H4V8H0V4h4z" fill="#fff" /></Svg>
    </div>
  );
}

const Cell = ({ width = "w-[49px]", className = "", children }) => <div className={"flex h-10 shrink-0 items-center justify-center " + width + " " + className}>{children}</div>;

function Taskbar() {
  return (
    <div className="ml-[10px] flex h-10 w-[1440px] shrink-0 bg-black text-white">
      <Cell width="w-[48px]">
        <Svg w={16} h={16} crisp={false}><path d="M0 2.500l6.500-1v6H0zM7.300 1.300 16 0v7.500H7.300zM0 8.500h6.500v6l-6.500-1zM7.300 8.500H16V16l-8.700-1.300z" fill="#fff" /></Svg>
      </Cell>
      <Cell width="w-[48px]">
        <Svg w={16} h={17} crisp={false}><circle cx="10.300" cy="6" r="5.200" stroke="#fff" strokeWidth="1.300" /><path d="M6.500 10 .5 16.300" stroke="#fff" strokeWidth="1.300" /></Svg>
      </Cell>
      <Cell width="w-[48px]">
        <Svg w={16} h={16} crisp={false}><circle cx="8" cy="8" r="6.800" stroke="#fff" strokeWidth="1.900" /></Svg>
      </Cell>
      <Cell width="w-[48px]">
        <Svg w={17} h={16} className="mb-px mr-px"><path d="M1 0h1v2h9V0h1v3H1zM1 5h11v7H1zM1 16v-3h11v3h-1v-2H2v2z" fill="#fff" /><path d="M2 6h9v5H2z" fill="#000" /><path d="M15 0h1v3h-1zM14 5h3v3h-3zM15 9h1v7h-1z" fill="#fff" /></Svg>
      </Cell>
      <Cell className="ml-[2px]">
        <svg width="24" height="24" viewBox="0 0 24 24">
          <defs>
            <linearGradient id="edgeTop" x1="0" y1="0" x2="1" y2=".5"><stop offset="0" stopColor="#0a9ce8" /><stop offset=".5" stopColor="#14c8e0" /><stop offset="1" stopColor="#35f06a" /></linearGradient>
            <linearGradient id="edgeSide" x1="0" y1="0" x2=".4" y2="1"><stop offset="0" stopColor="#1b9de2" /><stop offset="1" stopColor="#0c50cc" /></linearGradient>
          </defs>
          <circle cx="12" cy="12" r="12" fill="url(#edgeSide)" />
          <path d="M.3 10C1.500 3.500 6.500 0 12 0c7 0 12 5 12 10.500 0 4-3 5.500-6 5.500s-4-1.500-3.500-2.500c1.500-2 .5-6.500-4.500-6.500C5.500 7 2 8 .3 10z" fill="url(#edgeTop)" />
          <path d="M9 12c-2 5 2 10.500 8.500 10.700A12 12 0 0 0 23 17.500c.2-.6-.2-.8-.7-.5C17 19.500 11.500 17.500 11.500 13c0-2 1-3 1-3S10 9.500 9 12z" fill="#173c9c" />
          <path d="M11.500 12.500c0-2 1-2.800 1.800-2.700 1.700.5 2.200 2.500 1.200 3.900-.4.900.5 2.500 3 2.500 2.200 0 4-.700 5.500-2l1 1.300-1 2c-6 2.500-11.500-.5-11.500-5z" fill="#000" />
        </svg>
      </Cell>
      <Cell>
        <Svg w={22} h={18} crisp={false}><path d="M0 0h9l2 2h11v16H0z" fill="#e8a317" /><path d="M0 3h9l2-1.500h11V18H0z" fill="#ffdf5f" /><path d="M4 18v-6q0-2 2-2h10q2 0 2 2v6h-4v-4H8v4z" fill="#2f86dc" /></Svg>
      </Cell>
      <Cell>
        <Svg w={22} h={23} crisp={false}>
          <path d="M2 3v12c0 3 6 2.500 8 1.500l4-4V3z" fill="#f7dc2a" /><path d="M2 3v12c0 1 1.500 1.700 3 2V3z" fill="#fff06a" /><ellipse cx="8" cy="3" rx="6" ry="2.700" fill="#f2a24a" />
          <path d="M16 1.500h5V6M1.200 17v4.800H6" stroke="#1ea446" strokeWidth="2.400" />
          <path d="M9 14l3-3 2 2M12 12l8 9M20 11l-2 3-8 7" stroke="#154ca5" strokeWidth="2.200" />
        </Svg>
      </Cell>
      <Cell>
        <Svg w={19} h={24} crisp={false} className="mr-[1px]"><path d="M11 1q0-1 1-1h6q1 0 1 1v23h-8z" fill="#dc9605" /><path d="M5.500 7q0-1 1-1H13q1 0 1 1v17H5.500z" fill="#f2c811" /><path d="M0 13q0-1 1-1h7q1 0 1 1v11H1q-1 0-1-1z" fill="#ffe866" /></Svg>
      </Cell>
      <Cell width="w-[48px]" className="ml-px border-b-2 border-[#6db5f5] bg-[#333] pt-[2px]">
        <Svg w={21} h={24} crisp={false}><path d="M0 7l7-7h10q1 0 1 1v21H1q-1 0-1-1z" fill="#f7cf14" /><path d="M1 6l5-5v5z" fill="#fff7c0" /><path d="M15 8q0-1 1-1h4q.700 0 .7 1v16H15z" fill="#d68a05" /><path d="M12 12h6v12h-6z" fill="#f0bf10" /><path d="M8 17q0-1 1-1h5q1 0 1 1v7H9q-1 0-1-1z" fill="#ffe866" /></Svg>
      </Cell>
      <div className="ml-auto flex items-center pr-[1px]">
        <Txt w={15} className="mb-[4px] text-[11.500px]">EN</Txt>
        <Svg w={13} h={8} crisp={false} className="ml-[15px]"><path d="M.8 7 6.500 1.300 12.200 7" stroke="#fff" strokeWidth="1.300" /></Svg>
        <Svg w={17} h={14} className="ml-[10px]">
          <path d="M3.500 1.500h13v9h-13z" stroke="#fff" /><path d="M9 11h1v2h3v1H6v-1h3z" fill="#fff" /><path d="M0 0h6v14H0z" fill="#000" /><path d="M.5.500h4v4h-4zM2.500 5v8M2.500 13h4" stroke="#fff" /><path d="M6 1h1v1H6zM4 10h3v1H4z" fill="#fff" />
        </Svg>
        <div className="ml-[7px] flex w-[56px] flex-col items-center text-[12px] leading-[18px]"><Txt w={43}>8:49 AM</Txt><Txt w={52}>6/18/2022</Txt></div>
        <div className="ml-[4px] h-10 w-px bg-[#777]" />
        <div className="w-[3px]" />
      </div>
    </div>
  );
}

export default function App() {
  return (
    <div className="flex h-[941px] w-[1469px] flex-col overflow-hidden bg-[#444] font-['Open_Sans',sans-serif] text-[11px] leading-none">
      <div className="ml-[12px] flex h-[871px] w-[1436px] shrink-0 flex-col bg-[linear-gradient(180deg,#444444_0px,#424642_30px)] pt-[12px]">
        <TitleBar />
        <Tabs />
        <Ribbon />
        <div className="h-px shrink-0 bg-[#424642]" />
        <div className="flex h-[690px] shrink-0 bg-[#212121]">
          <ReportData />
          <Designer />
          <Properties />
        </div>
        <StatusBar />
        <div className="h-[3px] shrink-0 bg-[#424642]" />
      </div>
      <Taskbar />
    </div>
  );
}
